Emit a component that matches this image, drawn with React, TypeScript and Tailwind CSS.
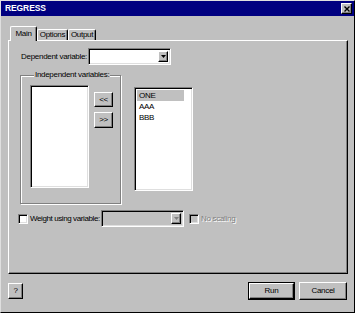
import React from "react";

const raised =
  "border border-t-white border-l-white border-r-black border-b-black shadow-[inset_-1px_-1px_0_#808080]";
const sunken =
  "border border-t-[#808080] border-l-[#808080] border-r-white border-b-white shadow-[inset_1px_1px_0_#000,inset_-1px_-1px_0_#dfdfdf]";

function Arrow({ disabled }: { disabled?: boolean }) {
  return (
    <svg width="5" height="3" viewBox="0 0 5 3">
      <path d="M0 0h5L2.5 3z" fill={disabled ? "#808080" : "#000"} />
    </svg>
  );
}

function Combo({ disabled }: { disabled?: boolean }) {
  return (
    <div
      className={`flex shrink-0 w-[83px] h-[17px] p-[2px] ${sunken} ${disabled ? "bg-[#c0c0c0]" : "bg-white"}`}
    >
      <div className="flex-1" />
      <div className={`w-[10px] h-full bg-[#c0c0c0] flex items-center justify-center ${raised}`}>
        <Arrow disabled={disabled} />
      </div>
    </div>
  );
}

function Check({ disabled }: { disabled?: boolean }) {
  return (
    <div className={`w-[10px] h-[10px] shrink-0 ${sunken} ${disabled ? "bg-[#c0c0c0]" : "bg-white"}`} />
  );
}

function Tab({ label, active }: { label: string; active?: boolean }) {
  return active ? (
    <div className="relative z-10 -mb-px h-[15px] w-[27px] bg-[#c0c0c0] flex items-center justify-center pb-[1px] border-t border-l border-white border-r border-r-black rounded-t-[2px] shadow-[inset_-1px_0_0_#808080]">
      {label}
    </div>
  ) : (
    <div className="h-[11px] flex items-center justify-center border-t border-l border-white border-r border-r-black rounded-t-[2px] shadow-[inset_-1px_0_0_#808080]">
      {label}
    </div>
  );
}

export default function App() {
  return (
    <div className="w-[355px] h-[313px] bg-[#c0c0c0] flex flex-col border border-t-[#dfdfdf] border-l-[#dfdfdf] border-r-black border-b-black text-[8px] tracking-[-0.3px] leading-none text-black font-['Liberation_Sans',Arial,sans-serif]">
      {/* Title bar */}
      <div className="h-[15px] bg-[#000080] flex items-center justify-between pl-[4px] pr-[2px]">
        <span className="text-white font-bold text-[8.5px] tracking-[-0.1px]">REGRESS</span>
        <div className={`w-[11px] h-[11px] bg-[#c0c0c0] flex items-center justify-center ${raised}`}>
          <svg width="6" height="6" viewBox="0 0 6 6">
            <path d="M0.5 0.5L5.5 5.5M5.5 0.5L0.5 5.5" stroke="#000" strokeWidth="1.4" />
          </svg>
        </div>
      </div>

      {/* Tabs */}
      <div className="pl-[7px] pr-[6px] mt-[10px]">
        <div className="flex items-end h-[14px] pl-[2px]">
          <Tab label="Main" active />
          <div className="w-[31px] flex flex-col">
            <Tab label="Options" />
          </div>
          <div className="w-[28px] flex flex-col">
            <Tab label="Output" />
          </div>
        </div>

        <div className="h-[234px] flex flex-col border border-t-white border-l-white border-r-black border-b-black shadow-[inset_-1px_-1px_0_#808080]">
          {/* Dependent variable */}
          <div className="flex items-center mt-[7px] pl-[10px]">
            <div className="w-[69px] text-right pr-[1px] whitespace-nowrap">Dependent variable:</div>
            <Combo />
          </div>

          {/* Lists */}
          <div className="flex items-start mt-[6px] pl-[11px]">
            <fieldset className="w-[101px] h-[133px] border border-[#808080] shadow-[1px_1px_0_#fff,inset_1px_1px_0_#fff] pl-[9px] flex">
              <legend className="ml-[4px] px-[1px] bg-[#c0c0c0] whitespace-nowrap">Independent variables:</legend>
              <div className="flex items-start mt-[6px]">
                <div className={`w-[59px] h-[103px] bg-white ${sunken}`} />
                <div className="flex flex-col ml-[5px] mt-[7px] gap-[5px]">
                  <div className={`w-[19px] h-[15px] flex items-center justify-center ${raised}`}>&lt;&lt;</div>
                  <div className={`w-[19px] h-[16px] flex items-center justify-center ${raised}`}>&gt;&gt;</div>
                </div>
              </div>
            </fieldset>
            <div className={`ml-[13px] mt-[16px] w-[59px] h-[104px] bg-white p-[2px] flex flex-col ${sunken}`}>
              <div className="w-[47px] h-[11px] bg-[#c0c0c0] flex items-center pl-[2px]">ONE</div>
              <div className="h-[11px] flex items-center pl-[2px]">AAA</div>
              <div className="h-[11px] flex items-center pl-[2px]">BBB</div>
            </div>
          </div>

          {/* Weight */}
          <div className="flex items-center mt-[6px] pl-[9px]">
            <Check />
            <div className="w-[71px] ml-[2px] whitespace-nowrap tracking-[-0.4px]">Weight using variable:</div>
            <Combo disabled />
            <div className="ml-[5px]">
              <Check disabled />
            </div>
            <span className="ml-[2px] text-[#808080] text-shadow-[1px_1px_0_#fff]">No scaling</span>
          </div>
        </div>
      </div>

      {/* Footer */}
      <div className="flex items-center mt-[8px] pl-[7px] pr-[7px]">
        <div className={`w-[15px] h-[16px] flex items-center justify-center ${raised}`}>?</div>
        <div className="ml-auto border border-black">
          <div className={`w-[45px] h-[16px] flex items-center justify-center ${raised}`}>Run</div>
        </div>
        <div className={`ml-[4px] w-[48px] h-[18px] flex items-center justify-center ${raised}`}>Cancel</div>
      </div>
    </div>
  );
}
